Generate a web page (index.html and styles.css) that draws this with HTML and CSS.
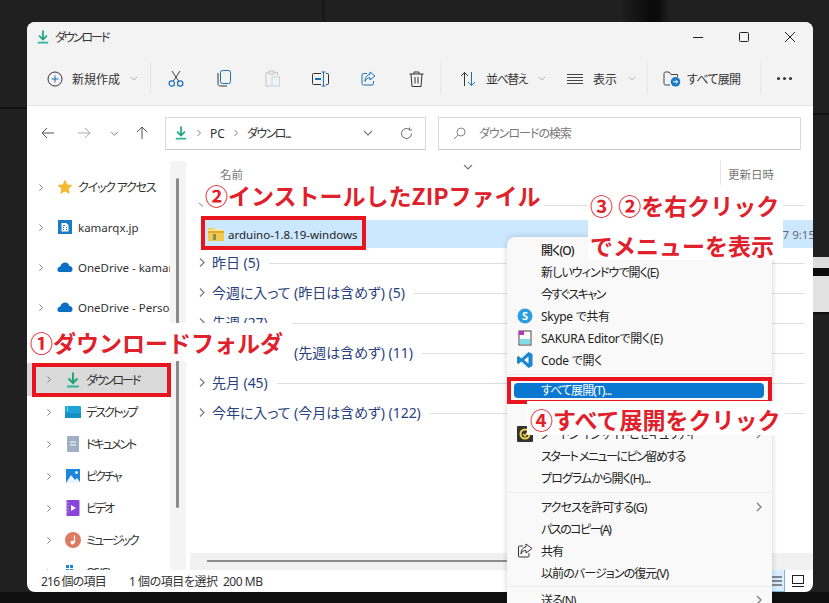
FILE: index.html
```html
<!DOCTYPE html>
<html lang="ja">
<head>
    <meta charset="UTF-8">
    <title>ダウンロード</title>
    <link rel="stylesheet" href="styles.css">
</head>
<body>
<svg class="sprite" width="0" height="0">
    <symbol id="i-download" viewBox="0 0 16 16"><path d="M8 0.5V10.5M3.5 6.5L8 11L12.5 6.5" fill="none" stroke="#1fa67f" stroke-width="2"/><path d="M2 14.5H14" stroke="#2ab5a0" stroke-width="2"/></symbol>
    <symbol id="i-chev-r" viewBox="0 0 8 10"><path d="M2 1L6 5L2 9" fill="none" stroke="#7d7d7d" stroke-width="1.3"/></symbol>
    <symbol id="i-chev-d" viewBox="0 0 10 8"><path d="M1 2L5 6L9 2" fill="none" stroke="#777" stroke-width="1.1"/></symbol>
    <symbol id="i-cloud" viewBox="0 0 18 12"><path d="M4 12C1.5 12 .5 10.300 .5 8.800C.5 7 2 5.800 3.500 5.800C4.500 2.500 7 1 9.200 1C11.800 1 13.500 2.800 14 5C16.200 5.200 17.500 6.800 17.500 8.600C17.500 10.500 16 12 14 12Z" fill="#0a6fc4"/></symbol>
</svg>

<div class="desktop">
    <div class="window">
        <!-- Title bar -->
        <header class="titlebar">
            <svg class="title-icon"><use href="#i-download"/></svg>
            <span class="title-text">ダウンロード</span>
            <div class="win-controls">
                <span class="win-btn"><svg width="12" height="12" viewBox="0 0 12 12"><path d="M1 6.500H11" stroke="#222" stroke-width="1"/></svg></span>
                <span class="win-btn"><svg width="12" height="12" viewBox="0 0 12 12"><rect x="1.500" y="1.500" width="9" height="9" rx="1" fill="none" stroke="#222"/></svg></span>
                <span class="win-btn"><svg width="12" height="12" viewBox="0 0 12 12"><path d="M1 1L11 11M11 1L1 11" stroke="#222" stroke-width="1"/></svg></span>
            </div>
        </header>

        <!-- Command bar -->
        <nav class="toolbar">
            <div class="tb-btn tb-new">
                <svg width="16" height="16" viewBox="0 0 16 16"><circle cx="8" cy="8" r="7" fill="none" stroke="#333" stroke-width="1"/><path d="M8 4.500V11.500M4.500 8H11.500" stroke="#1a6fb5" stroke-width="1"/></svg>
                <span>新規作成</span>
                <svg class="tb-chev"><use href="#i-chev-d"/></svg>
            </div>
            <span class="tb-sep"></span>
            <div class="tb-icon"><svg width="16" height="17" viewBox="0 0 16 17"><path d="M4 1L10.500 11M12 1L5.500 11" fill="none" stroke="#444" stroke-width="1"/><circle cx="3.800" cy="13.500" r="2.700" fill="none" stroke="#1a6fb5" stroke-width="1.200"/><circle cx="12.200" cy="13.500" r="2.700" fill="none" stroke="#1a6fb5" stroke-width="1.200"/></svg></div>
            <div class="tb-icon"><svg width="14" height="17" viewBox="0 0 14 17"><rect x="3.500" y="0.500" width="10" height="13" rx="2" fill="none" stroke="#1a6fb5"/><path d="M1 3V13.500C1 15 2 16 3.500 16H10" fill="none" stroke="#333"/></svg></div>
            <div class="tb-icon"><svg width="15" height="17" viewBox="0 0 15 17"><path d="M3.500 2.500H1V16H6M10 2.500H12.500V6" fill="none" stroke="#c4c4c4"/><rect x="4" y="1" width="5" height="3" fill="#eee" stroke="#c4c4c4"/><rect x="7" y="7" width="7.500" height="9" fill="none" stroke="#c4d6e6"/></svg></div>
            <div class="tb-icon"><svg width="17" height="16" viewBox="0 0 17 16"><path d="M9 2.500H1.500A1 1 0 0 0 .500 3.500V12.500A1 1 0 0 0 1.500 13.500H9" fill="none" stroke="#333"/><path d="M14 2.500H15.500A1 1 0 0 1 16.500 3.500V12.500A1 1 0 0 1 15.500 13.500H14" fill="none" stroke="#333"/><path d="M3 8H9" stroke="#1a6fb5" stroke-width="2"/><path d="M9.500 1H13.500M9.500 15H13.500M11.500 1V15" fill="none" stroke="#1a6fb5"/></svg></div>
            <div class="tb-icon"><svg width="15" height="15" viewBox="0 0 15 15"><path d="M6 2.500H2.500A1.500 1.500 0 0 0 1 4V12.500A1.500 1.500 0 0 0 2.500 14H11A1.500 1.500 0 0 0 12.500 12.500V10" fill="none" stroke="#1a6fb5"/><path d="M9 1L14 5L9 9V6.800C6.500 6.800 5 8 4 10.500C4 6.500 6 3.800 9 3.300Z" fill="none" stroke="#1a6fb5"/></svg></div>
            <div class="tb-icon"><svg width="15" height="16" viewBox="0 0 15 16"><path d="M0.500 3H14.500M5 3V1H10V3M2 3L3 15.500H12L13 3M6 6V12.500M9 6V12.500" fill="none" stroke="#333"/></svg></div>
            <span class="tb-sep"></span>
            <div class="tb-btn tb-sort">
                <svg width="16" height="16" viewBox="0 0 16 16"><path d="M4.500 15V1.500M1 5L4.500 1.500L8 5" fill="none" stroke="#333"/><path d="M11.500 1V14.500M8 11L11.500 14.500L15 11" fill="none" stroke="#1a6fb5"/></svg>
                <span>並べ替え</span>
                <svg class="tb-chev"><use href="#i-chev-d"/></svg>
            </div>
            <div class="tb-btn tb-view">
                <svg width="16" height="16" viewBox="0 0 16 16"><path d="M0 3.500H16M0 6.500H16M0 9.500H16M0 12.500H16" stroke="#444" stroke-width="1"/></svg>
                <span>表示</span>
                <svg class="tb-chev"><use href="#i-chev-d"/></svg>
            </div>
            <span class="tb-sep"></span>
            <div class="tb-btn tb-extract">
                <svg width="18" height="16" viewBox="0 0 18 16"><path d="M7 14H2.500A1.500 1.500 0 0 1 1 12.500V2.500A1.500 1.500 0 0 1 2.500 1H6L8 3.500H14.500V6" fill="none" stroke="#444"/><circle cx="12.500" cy="10.800" r="4.800" fill="#1a78c8"/><path d="M10 10.800H14.500M12.800 9L14.800 10.800L12.800 12.600" fill="none" stroke="#fff"/></svg>
                <span>すべて展開</span>
            </div>
            <span class="tb-sep"></span>
            <div class="tb-more"><i></i><i></i><i></i></div>
        </nav>

        <!-- Address row -->
        <div class="addressrow">
            <svg class="ar-btn ar-back" width="14" height="12" viewBox="0 0 14 12"><path d="M13 6H1M6 1L1 6L6 11" fill="none" stroke="#555"/></svg>
            <svg class="ar-btn ar-fwd" width="14" height="12" viewBox="0 0 14 12"><path d="M1 6H13M8 1L13 6L8 11" fill="none" stroke="#aaa"/></svg>
            <svg class="ar-btn ar-down"><use href="#i-chev-d"/></svg>
            <svg class="ar-btn ar-up" width="12" height="14" viewBox="0 0 12 14"><path d="M6 13V1M1 6L6 1L11 6" fill="none" stroke="#555"/></svg>
            <div class="addressbox">
                <svg class="ab-icon"><use href="#i-download"/></svg>
                <svg class="ab-chev"><use href="#i-chev-r"/></svg>
                <span>PC</span>
                <svg class="ab-chev"><use href="#i-chev-r"/></svg>
                <span class="ab-folder">ダウンロ...</span>
                <svg class="ab-drop"><use href="#i-chev-d"/></svg>
                <svg class="ab-refresh" width="13" height="13" viewBox="0 0 13 13"><path d="M11.500 6.500A5 5 0 1 1 9.500 2.500M9.500 .5V3H12" fill="none" stroke="#666"/></svg>
            </div>
            <div class="searchbox">
                <svg width="13" height="13" viewBox="0 0 13 13"><circle cx="8" cy="5" r="4" fill="none" stroke="#888"/><path d="M5 8L1 12" stroke="#888"/></svg>
                <span>ダウンロードの検索</span>
            </div>
        </div>

        <div class="main">
            <!-- Navigation pane -->
            <aside class="navpane">
                <div class="nav-list">
                    <div class="nav-row nav-ja">
                        <svg class="nav-chev"><use href="#i-chev-r"/></svg>
                        <svg class="nav-icon" viewBox="0 0 16 16"><path d="M8 .5L10.300 5.400L15.500 6L11.700 9.700L12.700 15L8 12.400L3.300 15L4.300 9.700L.5 6L5.700 5.400Z" fill="#f4b92e"/></svg>
                        <span>クイック アクセス</span>
                    </div>
                    <div class="nav-row">
                        <svg class="nav-chev"><use href="#i-chev-r"/></svg>
                        <svg class="nav-icon" viewBox="0 0 16 16"><rect x="1" y="1" width="14" height="14" fill="#1b7cc4"/><path d="M4.500 4H9L11.500 6V12.500H4.500Z" fill="#fff"/><path d="M6 6.500H8M6 8.500H7M9 8.500H10M6 10.500H7M9 10.500H10" stroke="#1b7cc4"/></svg>
                        <span>kamarqx.jp</span>
                    </div>
                    <div class="nav-row">
                        <svg class="nav-chev"><use href="#i-chev-r"/></svg>
                        <svg class="nav-icon" viewBox="0 0 18 12"><use href="#i-cloud"/></svg>
                        <span>OneDrive - kamarqx.jp</span>
                    </div>
                    <div class="nav-row">
                        <svg class="nav-chev"><use href="#i-chev-r"/></svg>
                        <svg class="nav-icon" viewBox="0 0 18 12"><use href="#i-cloud"/></svg>
                        <span>OneDrive - Personal</span>
                    </div>
                </div>
                <div class="nav-sublist">
                    <div class="nav-row nav-sub nav-selected">
                        <svg class="nav-chev"><use href="#i-chev-r"/></svg>
                        <svg class="nav-icon"><use href="#i-download"/></svg>
                        <span>ダウンロード</span>
                    </div>
                    <div class="nav-row nav-sub">
                        <svg class="nav-chev"><use href="#i-chev-r"/></svg>
                        <svg class="nav-icon" viewBox="0 0 16 16"><rect x="0" y="2" width="16" height="12" rx="1" fill="#1ea3d8"/><path d="M0 9H16V14H0Z" fill="#1790c4"/><path d="M2 4H3M2 6H3" stroke="#fff"/></svg>
                        <span>デスクトップ</span>
                    </div>
                    <div class="nav-row nav-sub">
                        <svg class="nav-chev"><use href="#i-chev-r"/></svg>
                        <svg class="nav-icon" viewBox="0 0 16 16"><rect x="2" y="0" width="12" height="16" rx="1" fill="#9db0c6"/><path d="M5 6H11M5 9H11" stroke="#fff"/></svg>
                        <span>ドキュメント</span>
                    </div>
                    <div class="nav-row nav-sub">
                        <svg class="nav-chev"><use href="#i-chev-r"/></svg>
                        <svg class="nav-icon" viewBox="0 0 16 16"><rect x="1" y="1" width="14" height="14" fill="#1c86dc"/><path d="M1 15L6 7L10 12L12 10L15 14V15Z" fill="#e8f3fb"/><circle cx="11.500" cy="4.500" r="1.500" fill="#e8f3fb"/></svg>
                        <span>ピクチャ</span>
                    </div>
                    <div class="nav-row nav-sub">
                        <svg class="nav-chev"><use href="#i-chev-r"/></svg>
                        <svg class="nav-icon" viewBox="0 0 16 16"><rect x="1.500" y="0" width="13" height="16" rx="1" fill="#8a44d8"/><path d="M6 5L11 8L6 11Z" fill="#fff"/><path d="M3 2V14" stroke="#c9a6f0" stroke-dasharray="1.500 1.500"/></svg>
                        <span>ビデオ</span>
                    </div>
                    <div class="nav-row nav-sub">
                        <svg class="nav-chev"><use href="#i-chev-r"/></svg>
                        <svg class="nav-icon" viewBox="0 0 16 16"><circle cx="8" cy="8" r="8" fill="#dc7a62"/><path d="M9.500 3.500V10.500" stroke="#fff" stroke-width="1.200"/><circle cx="7.500" cy="10.500" r="2" fill="#fff"/></svg>
                        <span>ミュージック</span>
                    </div>
                    <div class="nav-row nav-sub">
                        <svg class="nav-chev"><use href="#i-chev-r"/></svg>
                        <svg class="nav-icon" viewBox="0 0 16 16"><path d="M1 1H4V4H1ZM5 1H8V4H5ZM1 5H4V8H1ZM5 5H8V8H5Z" fill="#1c86dc"/></svg>
                        <span>OS (C:)</span>
                    </div>
                </div>
                <div class="nav-scroll"><div class="nav-thumb"></div></div>
            </aside>

            <!-- File list -->
            <section class="filepane">
                <div class="file-header">
                    <span class="col-name">名前</span>
                    <svg class="sort-caret"><use href="#i-chev-d"/></svg>
                    <span class="col-date">更新日時</span>
                </div>
                <div class="group-row">
                    <svg class="group-chev-d"><use href="#i-chev-d"/></svg>
                    <span>今日 (1)</span><i class="group-line"></i>
                </div>
                <div class="file-row">
                    <svg class="zip-icon" viewBox="0 0 16 14"><path d="M0 1H6L7.500 3H16V14H0Z" fill="#f2c94c"/><path d="M0 4H16V6H0Z" fill="#e3a92b"/><rect x="5" y="7" width="3" height="6" fill="#8a8f55"/><path d="M0 3H16" stroke="#fff2b8"/></svg>
                    <span class="file-name">arduino-1.8.19-windows</span>
                    <span class="file-date">2022/01/27 9:15</span>
                </div>
                <div class="group-row"><svg class="group-chev"><use href="#i-chev-r"/></svg><span>昨日 (5)</span><i class="group-line"></i></div>
                <div class="group-row"><svg class="group-chev"><use href="#i-chev-r"/></svg><span>今週に入って (昨日は含めず) (5)</span><i class="group-line"></i></div>
                <div class="group-row"><svg class="group-chev"><use href="#i-chev-r"/></svg><span>先週 (27)</span><i class="group-line"></i></div>
                <div class="group-row"><svg class="group-chev"><use href="#i-chev-r"/></svg><span>今月に入って (先週は含めず) (11)</span><i class="group-line"></i></div>
                <div class="group-row"><svg class="group-chev"><use href="#i-chev-r"/></svg><span>先月 (45)</span><i class="group-line"></i></div>
                <div class="group-row"><svg class="group-chev"><use href="#i-chev-r"/></svg><span>今年に入って (今月は含めず) (122)</span><i class="group-line"></i></div>
                <div class="hscroll"><div class="hthumb"></div></div>
            </section>
        </div>

        <!-- Status bar -->
        <footer class="statusbar">
            <span class="st-count">216 個の項目</span>
            <span class="st-selected">1 個の項目を選択&nbsp; 200 MB</span>
            <div class="st-views">
                <span class="st-view st-active"><svg width="14" height="12" viewBox="0 0 14 12"><path d="M1 2H13M1 6H13M1 10H13" stroke="#222"/></svg></span>
                <span class="st-view"><svg width="14" height="14" viewBox="0 0 14 14"><rect x="1.500" y="1.500" width="11" height="8" fill="none" stroke="#222"/><path d="M1 12.500H13" stroke="#222"/></svg></span>
            </div>
        </footer>
    </div>

    <!-- Context menu -->
    <div class="menu">
        <div class="mi mi-bold">開く(O)</div>
        <div class="mi">新しいウィンドウで開く(E)</div>
        <div class="mi mi-narrow">今すぐスキャン</div>
        <div class="mi mi-latin">
            <svg class="mi-icon" viewBox="0 0 16 16"><circle cx="8" cy="8" r="7.500" fill="#2b9fe0"/><text x="8" y="12" class="skype-s">S</text></svg>Skype で共有
        </div>
        <div class="mi mi-latin">
            <svg class="mi-icon" viewBox="0 0 16 16"><rect x="2" y="1" width="12" height="14" fill="#fff" stroke="#444"/><rect x="2" y="1" width="5" height="4" fill="#c030c0"/><rect x="3" y="9" width="10" height="5" fill="#7fdde8"/></svg>SAKURA Editorで開く(E)
        </div>
        <div class="mi mi-latin">
            <svg class="mi-icon" viewBox="0 0 16 16"><path d="M11.500 0L15.500 2V14L11.500 16L4.500 9.500L1.500 12L0 11V5L1.500 4L4.500 6.500ZM11.500 4.500L7 8L11.500 11.500Z" fill="#1a86d0"/></svg>Code で開く
        </div>
        <div class="mi-sep mi-sep-wide"></div>
        <div class="mi mi-active"><span>すべて展開(T)...</span></div>
        <div class="mi">スタート画面にピン留めする</div>
        <div class="mi">
            <svg class="mi-icon" viewBox="0 0 16 16"><rect width="16" height="16" rx="1" fill="#333"/><circle cx="8" cy="8" r="4.500" fill="none" stroke="#f2d34c" stroke-width="2"/><path d="M6 8L8 10L13 3" fill="none" stroke="#f2d34c" stroke-width="1.500"/></svg>ノートン インサイトとセキュリティ
            <svg class="mi-arrow"><use href="#i-chev-r"/></svg>
        </div>
        <div class="mi mi-narrow">スタート メニューにピン留めする</div>
        <div class="mi">プログラムから開く(H)...</div>
        <div class="mi-sep"></div>
        <div class="mi">アクセスを許可する(G)<svg class="mi-arrow"><use href="#i-chev-r"/></svg></div>
        <div class="mi mi-narrow">パスのコピー(A)</div>
        <div class="mi">
            <svg class="mi-icon" viewBox="0 0 16 16"><path d="M6 3H2.500A1 1 0 0 0 1.500 4V13A1 1 0 0 0 2.500 14H11A1 1 0 0 0 12 13V10" fill="none" stroke="#333"/><path d="M9 1L15 5.500L9 10V7.500C6.500 7.500 5 8.500 4 11C4 7 6 4.300 9 3.700Z" fill="none" stroke="#333"/></svg>共有
        </div>
        <div class="mi">以前のバージョンの復元(V)</div>
        <div class="mi-sep mi-sep-narrow"></div>
        <div class="mi">送る(N)<svg class="mi-arrow"><use href="#i-chev-r"/></svg></div>
    </div>

    <!-- Red annotations over the screenshot -->
    <div class="redbox redbox-nav"></div>
    <div class="redbox redbox-file"></div>
    <div class="redbox redbox-menu"></div>
    <div class="note note-1">①ダウンロードフォルダ</div>
    <div class="note note-2">②インストールしたZIPファイル</div>
    <div class="note note-3"><div>③ ②を右クリック</div><div>でメニューを表示</div></div>
    <div class="note note-4">④すべて展開をクリック</div>
</div>
</body>
</html>
```

FILE: styles.css
```css
* {
    box-sizing: border-box;
}
html, body {
    margin: 0;
    padding: 0;
}
body {
    width: 829px;
    height: 603px;
    overflow: hidden;
    background-color: #202020;
    font-family: "Noto Sans", "Noto Sans CJK JP", sans-serif;
    font-size: 12px;
    color: #333;
    font-feature-settings: "palt";
}
.sprite {
    position: absolute;
}
svg {
    display: block;
    flex: none;
}
.desktop {
    position: relative;
    width: 829px;
    height: 603px;
    overflow: hidden;
    background-color: #202020;
    background-image:
        linear-gradient(#101010, #101010),
        linear-gradient(#181818, #181818),
        linear-gradient(90deg, #202020, #0a0a0a 60%, #0a0a0a 75%, #202020),
        linear-gradient(#111, #111),
        linear-gradient(#dcdcdc, #dcdcdc),
        linear-gradient(#0c0c0c, #0c0c0c),
        linear-gradient(#e2e2e2, #e2e2e2),
        linear-gradient(#111, #111),
        linear-gradient(#111, #111);
    background-repeat: no-repeat;
    background-size: 829px 11px, 3px 22px, 50px 22px, 27px 2px, 16px 11px, 16px 8px, 16px 36px, 16px 2px, 16px 2px;
    background-position: 0 592px, 322px 0, 620px 0, 0 107px, 813px 257px, 813px 268px, 813px 276px, 813px 312px, 813px 113px;
}

/* Window */
.window {
    position: absolute;
    left: 27px;
    top: 22px;
    width: 786px;
    height: 570px;
    display: flex;
    flex-direction: column;
    background-color: #fff;
    border-radius: 8px;
    overflow: hidden;
}
.titlebar {
    height: 30px;
    display: flex;
    align-items: center;
    padding-left: 9px;
    background-color: #f3f3f3;
}
.title-icon {
    width: 14px;
    height: 16px;
}
.title-text {
    margin-left: 5px;
    letter-spacing: -2px;
}
.win-controls {
    display: flex;
    margin-left: auto;
}
.win-btn {
    width: 46px;
    height: 30px;
    display: flex;
    align-items: center;
    justify-content: center;
}

/* Command bar */
.toolbar {
    height: 54px;
    display: flex;
    align-items: center;
    background-color: #f3f3f3;
    border-bottom: 1px solid #e3e3e3;
}
.tb-btn {
    display: flex;
    align-items: center;
    height: 32px;
    gap: 9px;
}
.tb-new {
    width: 103px;
    margin-left: 20px;
}
.tb-sort {
    width: 114px;
    padding-left: 19px;
    gap: 10px;
    letter-spacing: -1.5px;
}
.tb-view {
    width: 92px;
    padding-left: 12px;
    gap: 10px;
}
.tb-extract {
    width: 112px;
    padding-left: 15px;
    gap: 6px;
    letter-spacing: -0.7px;
}
.tb-chev {
    width: 8px;
    height: 7px;
    margin-left: 1px;
    opacity: 0.6;
}
.tb-sep {
    width: 1px;
    height: 32px;
    background-color: #e6e6e6;
}
.tb-sep + .tb-icon {
    margin-left: 1px;
}
.tb-icon {
    width: 48px;
    display: flex;
    justify-content: center;
}
.tb-more {
    width: 46px;
    display: flex;
    justify-content: center;
    gap: 3px;
}
.tb-more i {
    width: 3px;
    height: 3px;
    border-radius: 50%;
    background-color: #333;
}

/* Address row */
.addressrow {
    height: 55px;
    flex: none;
    display: flex;
    align-items: center;
    position: relative;
    padding-bottom: 1px;
}
.ar-back {
    margin-left: 14px;
}
.ar-fwd {
    margin-left: 22px;
}
.ar-down {
    width: 9px;
    height: 7px;
    margin-left: 19px;
}
.ar-up {
    margin-left: 17px;
}
.addressbox {
    width: 261px;
    height: 33px;
    margin-left: 17px;
    display: flex;
    align-items: center;
    padding: 0 12px 0 8px;
    border: 1px solid #dadada;
    border-bottom-color: #c8c8c8;
}
.ab-icon {
    width: 14px;
    height: 16px;
}
.ab-chev {
    width: 6px;
    height: 8px;
    margin: 0 8px;
}
.ab-folder {
    white-space: nowrap;
    letter-spacing: -1.5px;
}
.ab-drop {
    width: 10px;
    height: 8px;
    margin-left: auto;
}
.ab-refresh {
    margin-left: 27px;
}
.searchbox {
    width: 363px;
    height: 33px;
    margin-left: 12px;
    display: flex;
    align-items: center;
    gap: 13px;
    padding-left: 14px;
    color: #777;
    border: 1px solid #dadada;
    border-bottom-color: #c8c8c8;
    letter-spacing: -1px;
}

/* Navigation pane */
.main {
    flex: 1;
    min-height: 0;
    display: flex;
}
.navpane {
    position: relative;
    width: 163px;
    flex: none;
    overflow: hidden;
    padding-top: 6px;
}
.nav-list {
    width: 143px;
    overflow: hidden;
}
.nav-row {
    height: 40px;
    display: flex;
    align-items: center;
    padding-left: 11px;
    white-space: nowrap;
    font-size: 11.500px;
}
.nav-ja {
    font-size: 12px;
    letter-spacing: -1.2px;
}
.nav-chev {
    width: 6px;
    height: 9px;
}
.nav-icon {
    width: 16px;
    height: 16px;
    margin: 0 5px 0 13px;
}
.nav-sublist {
    width: 143px;
    margin-top: 36px;
    overflow: hidden;
}
.nav-sub {
    height: 32px;
    padding-left: 19px;
    font-size: 12px;
    letter-spacing: -2px;
}
.nav-selected {
    height: 33px;
    background-color: #dadada;
}
.nav-scroll {
    position: absolute;
    left: 143px;
    top: 0;
    bottom: 0;
    width: 16px;
    background-color: #f4f4f4;
}
.nav-thumb {
    width: 3px;
    height: 330px;
    margin: 17px 0 0 6px;
    border-radius: 2px;
    background-color: #8c8c8c;
}

/* File list */
.filepane {
    position: relative;
    flex: 1;
    min-width: 0;
    padding-left: 0;
}
.file-header {
    height: 29px;
    display: flex;
    align-items: flex-start;
    padding: 5px 0 0 30px;
    font-size: 11.500px;
    color: #777;
}
.col-name {
    width: 24px;
}
.sort-caret {
    width: 10px;
    height: 8px;
    margin: -3px 0 0 219px;
}
.col-date {
    margin-left: 247px;
    padding-left: 7px;
    height: 24px;
    margin-top: -5px;
    padding-top: 5px;
    border-left: 1px solid #e5e5e5;
}
.group-row {
    height: 30px;
    display: flex;
    align-items: center;
    padding: 0 8px 2px;
    font-size: 14px;
    letter-spacing: -0.05px;
    color: #2a3f7e;
    white-space: nowrap;
}
.group-chev {
    width: 8px;
    height: 13px;
    margin-right: 6px;
}
.group-chev-d {
    width: 9px;
    height: 7px;
    margin-right: 5px;
}
.group-line {
    flex: 1;
    height: 1px;
    margin: 2px 0 0 9px;
    background-color: #dfdfdf;
}
.file-row {
    height: 28px;
    margin-left: 13px;
    display: flex;
    align-items: center;
    padding-left: 5px;
    background-color: #cce8ff;
}
.zip-icon {
    width: 16px;
    height: 14px;
}
.file-name {
    margin-left: 4px;
    flex: 1;
    font-size: 11.500px;
    color: #222;
    white-space: nowrap;
}
.file-date {
    width: 85px;
    overflow: hidden;
    white-space: nowrap;
    font-size: 11.500px;
    color: #667;
}
.hscroll {
    position: absolute;
    left: 0;
    right: 0;
    bottom: 0;
    height: 17px;
    background-color: #f1f1f1;
}
.hthumb {
    width: 400px;
    height: 2px;
    margin: 7px 0 0 17px;
    background-color: #8c8c8c;
}

/* Status bar */
.statusbar {
    height: 22px;
    flex: none;
    display: flex;
    align-items: center;
    padding-left: 14px;
    color: #333;
}
.st-count {
    width: 88px;
    letter-spacing: -0.8px;
}
.st-selected {
    letter-spacing: -0.45px;
}
.st-views {
    display: flex;
    margin-left: auto;
    margin-right: 6px;
    gap: 4px;
}
.st-view {
    width: 18px;
    height: 22px;
    display: flex;
    align-items: center;
    justify-content: center;
}
.st-active {
    background-color: #d8edff;
    border: 1px solid #7cb4d8;
    border-top: none;
}

/* Context menu */
.menu {
    position: absolute;
    left: 507px;
    top: 237px;
    width: 265px;
    height: 380px;
    padding-top: 2px;
    background-color: #f9f9f9;
    border-radius: 8px;
    box-shadow: 0 0 6px rgba(0, 0, 0, 0.18);
}
.mi {
    position: relative;
    height: 22px;
    display: flex;
    align-items: center;
    padding-left: 34px;
    white-space: nowrap;
    letter-spacing: -0.9px;
    color: #222;
}
.mi-bold {
    font-weight: 500;
}
.mi-narrow {
    letter-spacing: -1.5px;
}
.mi-latin {
    letter-spacing: -0.3px;
}
.mi-icon {
    position: absolute;
    left: 10px;
    top: 3px;
    width: 16px;
    height: 16px;
}
.mi-arrow {
    position: absolute;
    right: 9px;
    top: 6px;
    width: 8px;
    height: 10px;
}
.mi-active {
    color: #fff;
}
.mi-active::before {
    content: "";
    position: absolute;
    left: 7px;
    right: 8px;
    top: 4px;
    bottom: 3px;
    border-radius: 4px;
    background-color: #0a78d0;
}
.mi-active span {
    position: relative;
}
.mi-sep {
    height: 7px;
    padding-top: 3px;
}
.mi-sep::after {
    content: "";
    display: block;
    height: 1px;
    background-color: #ececec;
}
.mi-sep-wide {
    height: 8px;
}
.mi-sep-narrow {
    height: 5px;
    padding-top: 2px;
}
.skype-s {
    font-size: 11px;
    font-weight: 700;
    fill: #fff;
    text-anchor: middle;
}

/* Annotations */
.redbox {
    position: absolute;
    border: 4px solid #e8141e;
}
.redbox-nav {
    left: 32px;
    top: 363px;
    width: 139px;
    height: 34px;
}
.redbox-file {
    left: 201px;
    top: 216px;
    width: 165px;
    height: 34px;
}
.redbox-menu {
    left: 507px;
    top: 377px;
    width: 265px;
    height: 27px;
}
.note {
    position: absolute;
    background-color: #fff;
    color: #e0202a;
    font-family: "Noto Sans CJK JP", sans-serif;
    font-size: 23px;
    font-weight: 700;
    font-feature-settings: normal;
    white-space: nowrap;
}
.note-1 {
    left: 30px;
    top: 323px;
    width: 262px;
    height: 38px;
    line-height: 38px;
}
.note-2 {
    left: 203px;
    top: 183px;
    width: 341px;
    height: 33px;
    padding-left: 2px;
    line-height: 25px;
}
.note-3 {
    left: 588px;
    top: 185px;
    width: 195px;
    height: 75px;
    padding-left: 2px;
    line-height: 40px;
}
.note-4 {
    left: 527px;
    top: 401px;
    width: 258px;
    height: 34px;
    line-height: 36px;
    padding-left: 3px;
}
```
